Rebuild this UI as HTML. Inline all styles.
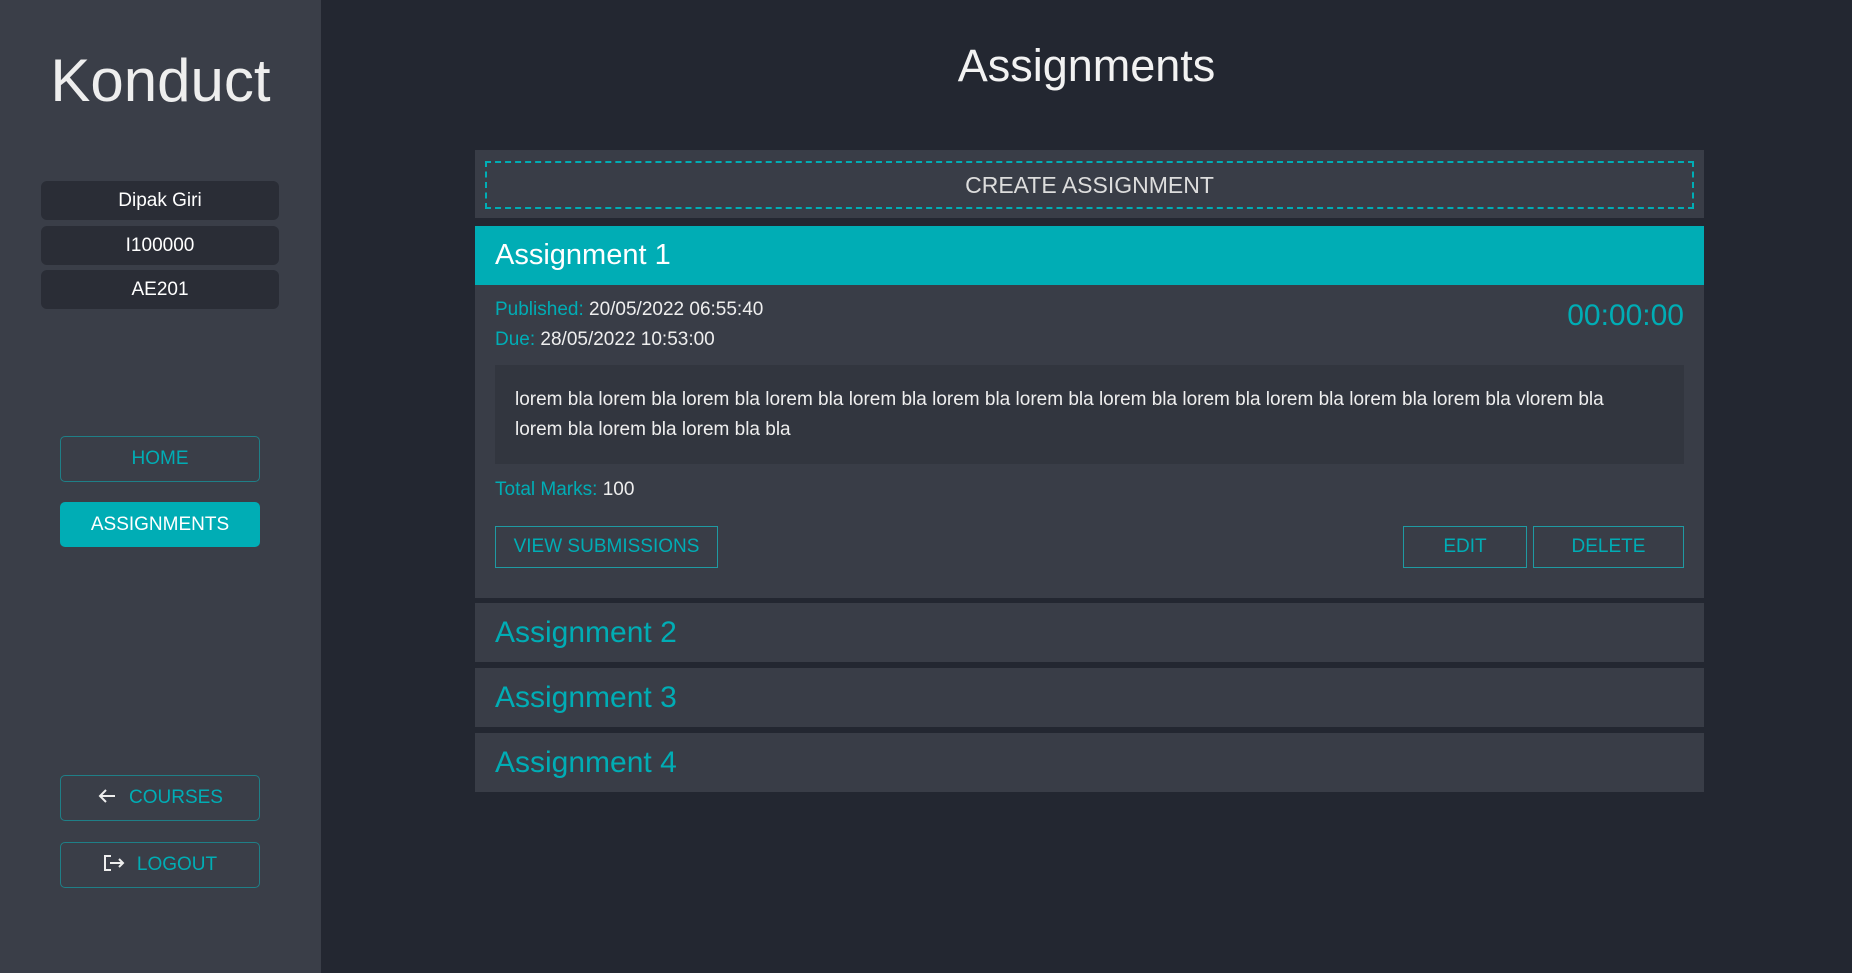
<!DOCTYPE html>
<html><head><meta charset="utf-8"><style>
*{box-sizing:border-box;margin:0;padding:0}
body{width:1852px;height:973px;background:#232731;font-family:"Liberation Sans",sans-serif;position:relative;overflow:hidden;color:#eee}
.side{position:absolute;left:0;top:0;width:321px;height:973px;background:#3a3e48}
.logo{position:absolute;left:0;width:321px;top:46px;text-align:center;font-size:60px;color:#eee}
.pill{position:absolute;left:41px;width:238px;height:39px;background:#2a2d36;border-radius:6px;text-align:center;line-height:39px;font-size:19px;color:#fff}
.nb{position:absolute;left:60px;width:200px;height:46px;border:1px solid #1f7f87;border-radius:5px;text-align:center;line-height:44px;font-size:19px;color:#00adb5}
.nb.act{background:#00adb5;color:#fff;border-color:#00adb5}
.nb svg{vertical-align:middle;margin-right:12px;margin-top:-4px}
h1{position:absolute;left:321px;right:0;top:40px;text-align:center;font-weight:normal;font-size:45px;color:#f2f2f2}
.box{position:absolute;left:475px;width:1229px;background:#393d47}
.create{top:150px;height:68px}
.create div{position:absolute;left:10px;right:10px;top:11px;bottom:9px;border:2px dashed #00adb5;text-align:center;line-height:44px;font-size:23px;color:#ddd}
.head{top:226px;height:59px;background:#00adb5;color:#fff;font-size:29px;line-height:59px;padding-left:20px}
.body{top:285px;height:313px}
.t{color:#00adb5}
.lbl{position:absolute;left:20px;font-size:19px;color:#eee}
.timer{position:absolute;right:20px;top:14px;font-size:30px;color:#00adb5}
.desc{position:absolute;left:20px;right:20px;top:80px;height:99px;background:#32363f;padding:20px 60px 20px 20px;font-size:19px;line-height:30px;color:#eee}
.btn{position:absolute;top:241px;height:42px;border:1px solid #1f9aa2;text-align:center;line-height:40px;font-size:19px;color:#00adb5}
.col{height:59px;color:#00adb5;font-size:30px;line-height:59px;padding-left:20px}
</style></head><body>
<div class="side">
<div class="logo">Konduct</div>
<div class="pill" style="top:181px">Dipak Giri</div>
<div class="pill" style="top:226px">I100000</div>
<div class="pill" style="top:270px">AE201</div>
<div class="nb" style="top:436px">HOME</div>
<div class="nb act" style="top:502px;height:45px">ASSIGNMENTS</div>
<div class="nb" style="top:775px"><svg width="20" height="16" viewBox="0 0 20 16"><path d="M18 8H3M9 2L3 8l6 6" stroke="#eee" stroke-width="2" fill="none"/></svg>COURSES</div>
<div class="nb" style="top:842px"><svg width="22" height="18" viewBox="0 0 22 18"><path d="M8 2H2v14h6M7 9h13M16 5l4 4-4 4" stroke="#eee" stroke-width="2" fill="none"/></svg>LOGOUT</div>
</div>
<h1>Assignments</h1>
<div class="box create"><div>CREATE ASSIGNMENT</div></div>
<div class="box head">Assignment 1</div>
<div class="box body">
<div class="lbl" style="top:14px"><span class="t">Published:</span> 20/05/2022 06:55:40</div>
<div class="lbl" style="top:44px"><span class="t">Due:</span> 28/05/2022 10:53:00</div>
<div class="timer">00:00:00</div>
<div class="desc">lorem bla lorem bla lorem bla lorem bla lorem bla lorem bla lorem bla lorem bla lorem bla lorem bla lorem bla lorem bla vlorem bla lorem bla lorem bla lorem bla bla</div>
<div class="lbl" style="top:194px"><span class="t">Total Marks:</span> 100</div>
<div class="btn" style="left:20px;width:223px">VIEW SUBMISSIONS</div>
<div class="btn" style="left:928px;width:124px">EDIT</div>
<div class="btn" style="left:1058px;width:151px">DELETE</div>
</div>
<div class="box col" style="top:603px">Assignment 2</div>
<div class="box col" style="top:668px">Assignment 3</div>
<div class="box col" style="top:733px">Assignment 4</div>
</body></html>
